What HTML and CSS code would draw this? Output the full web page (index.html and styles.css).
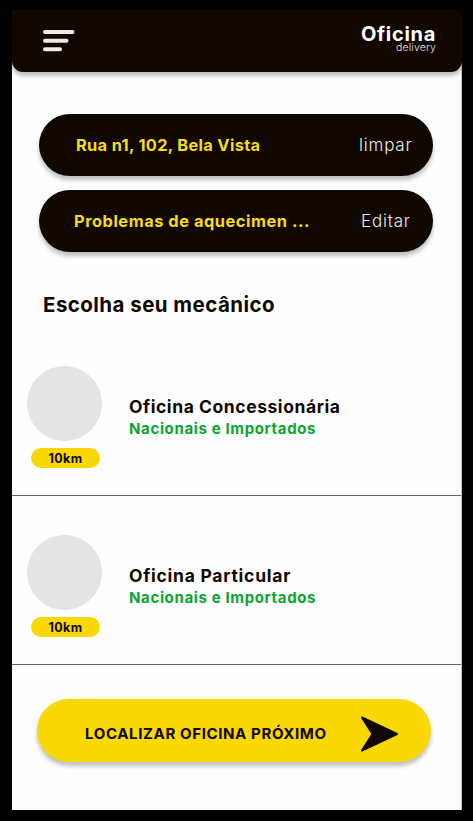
FILE: index.html
```html
<!DOCTYPE html>
<html lang="pt-BR">
<head>
<meta charset="utf-8">
<title>Oficina delivery</title>
<link rel="stylesheet" href="styles.css">
</head>
<body>
<main class="screen">
  <header class="topbar">
    <svg class="menu" width="32" height="22" viewBox="0 0 32 22" fill="none" stroke="#f0e9e6" stroke-width="4" stroke-linecap="round"><path d="M2 2H29.5M2 10.7H23.5M2 19.3H17"/></svg>
    <div class="brand"><span class="brand-name">Oficina</span><span class="brand-sub">delivery</span></div>
  </header>
  <section class="fields">
    <div class="field"><span class="value address">Rua n1, 102, Bela Vista</span><span class="action clear">limpar</span></div>
    <div class="field"><span class="value problem">Problemas de aquecimen ...</span><span class="action edit">Editar</span></div>
  </section>
  <h1 class="title"><span>Escolha seu mecânico</span></h1>
  <ul class="list">
    <li class="item">
      <div class="side"><div class="avatar"></div><span class="badge">10km</span></div>
      <div class="info"><h2 class="name dealer">Oficina Concessionária</h2><p class="kind">Nacionais e Importados</p></div>
    </li>
    <li class="item">
      <div class="side"><div class="avatar"></div><span class="badge">10km</span></div>
      <div class="info"><h2 class="name private">Oficina Particular</h2><p class="kind">Nacionais e Importados</p></div>
    </li>
  </ul>
  <button class="cta"><span class="cta-label">LOCALIZAR OFICINA PRÓXIMO</span>
    <svg class="arrow" width="40" height="38" viewBox="0 0 40 38" fill="#100700" stroke="#100700" stroke-width="2" stroke-linejoin="round"><path d="M2 2.5L37 19L2 35.5L12.5 19Z"/></svg>
  </button>
</main>
</body>
</html>
```
FILE: styles.css
```css
* { box-sizing: border-box; margin: 0; padding: 0; }
body { width: 473px; height: 821px; padding: 10px 11px 11px 12px; background: #000; font-family: Inter, sans-serif; color: #100700; overflow: hidden; }
.screen { display: flex; flex-direction: column; height: 800px; background: #fefefe; border-right: 1px solid #c4c4c4; }
.topbar { display: flex; justify-content: space-between; align-items: flex-start; width: 450px; height: 62px; padding: 20px 26px 0 31px; background: #100700; border-radius: 0 0 11px 11px; box-shadow: 0 4px 4px rgba(0, 0, 0, .25); }
.brand { display: flex; flex-direction: column; align-items: flex-end; margin-top: -8px; white-space: nowrap; }
.brand-name { font-size: 20px; line-height: 24px; font-weight: 750; color: #fff; letter-spacing: .7px; }
.brand-sub { font-size: 10.5px; line-height: 12px; margin-top: -4px; font-weight: 300; color: #f0e9e6; letter-spacing: .15px; }
.fields { display: flex; flex-direction: column; gap: 14px; margin: 42px 28px 0 27px; }
.field { display: flex; align-items: center; width: 394px; height: 62px; padding: 0 0 0 37px; border-radius: 31px; background: #100700; box-shadow: 0 4px 4px rgba(0, 0, 0, .25); white-space: nowrap; }
.value { width: 283px; font-size: 16.4px; font-weight: 700; color: #f5dc15; letter-spacing: .32px; }
.problem { margin-left: -2px; width: 287px; letter-spacing: .53px; }
.action { font-size: 17px; font-weight: 300; color: #f0e9e6; letter-spacing: .8px; }
.title { height: 25px; margin: 40px 0 0 31px; font-size: 20.5px; line-height: 25px; font-weight: 700; letter-spacing: .45px; white-space: nowrap; }
.list { list-style: none; margin-top: 19px; }
.item { display: flex; height: 169px; padding: 39px 0 0 15px; border-bottom: 1px solid #646464; }
.item:first-child { height: 160px; padding-top: 30px; }
.side { display: flex; flex-direction: column; align-items: center; width: 75px; }
.avatar { width: 75px; height: 75px; border-radius: 50%; background: #e4e4e4; }
.badge { width: 69px; height: 20px; margin: 7px 0 0 2px; border-radius: 10px; background: #f9d803; text-align: center; font-size: 12.5px; line-height: 21px; font-weight: 700; letter-spacing: .4px; }
.info { margin: 30px 0 0 27px; white-space: nowrap; }
.name { font-size: 17.5px; line-height: 22px; font-weight: 650; letter-spacing: .56px; }
.private { letter-spacing: .74px; }
.kind { font-size: 15px; line-height: 22px; font-weight: 650; color: #09a62f; letter-spacing: .64px; }
.cta { display: flex; align-items: center; width: 394px; height: 63px; margin: 34px 0 0 25px; padding: 6px 0 0 48px; border: 0; border-radius: 32px; background: #f9d803; box-shadow: 0 4px 4px rgba(0, 0, 0, .25); font-family: inherit; color: #100700; white-space: nowrap; }
.cta-label { width: 275px; text-align: left; font-size: 15.1px; font-weight: 650; letter-spacing: .57px; }
```
